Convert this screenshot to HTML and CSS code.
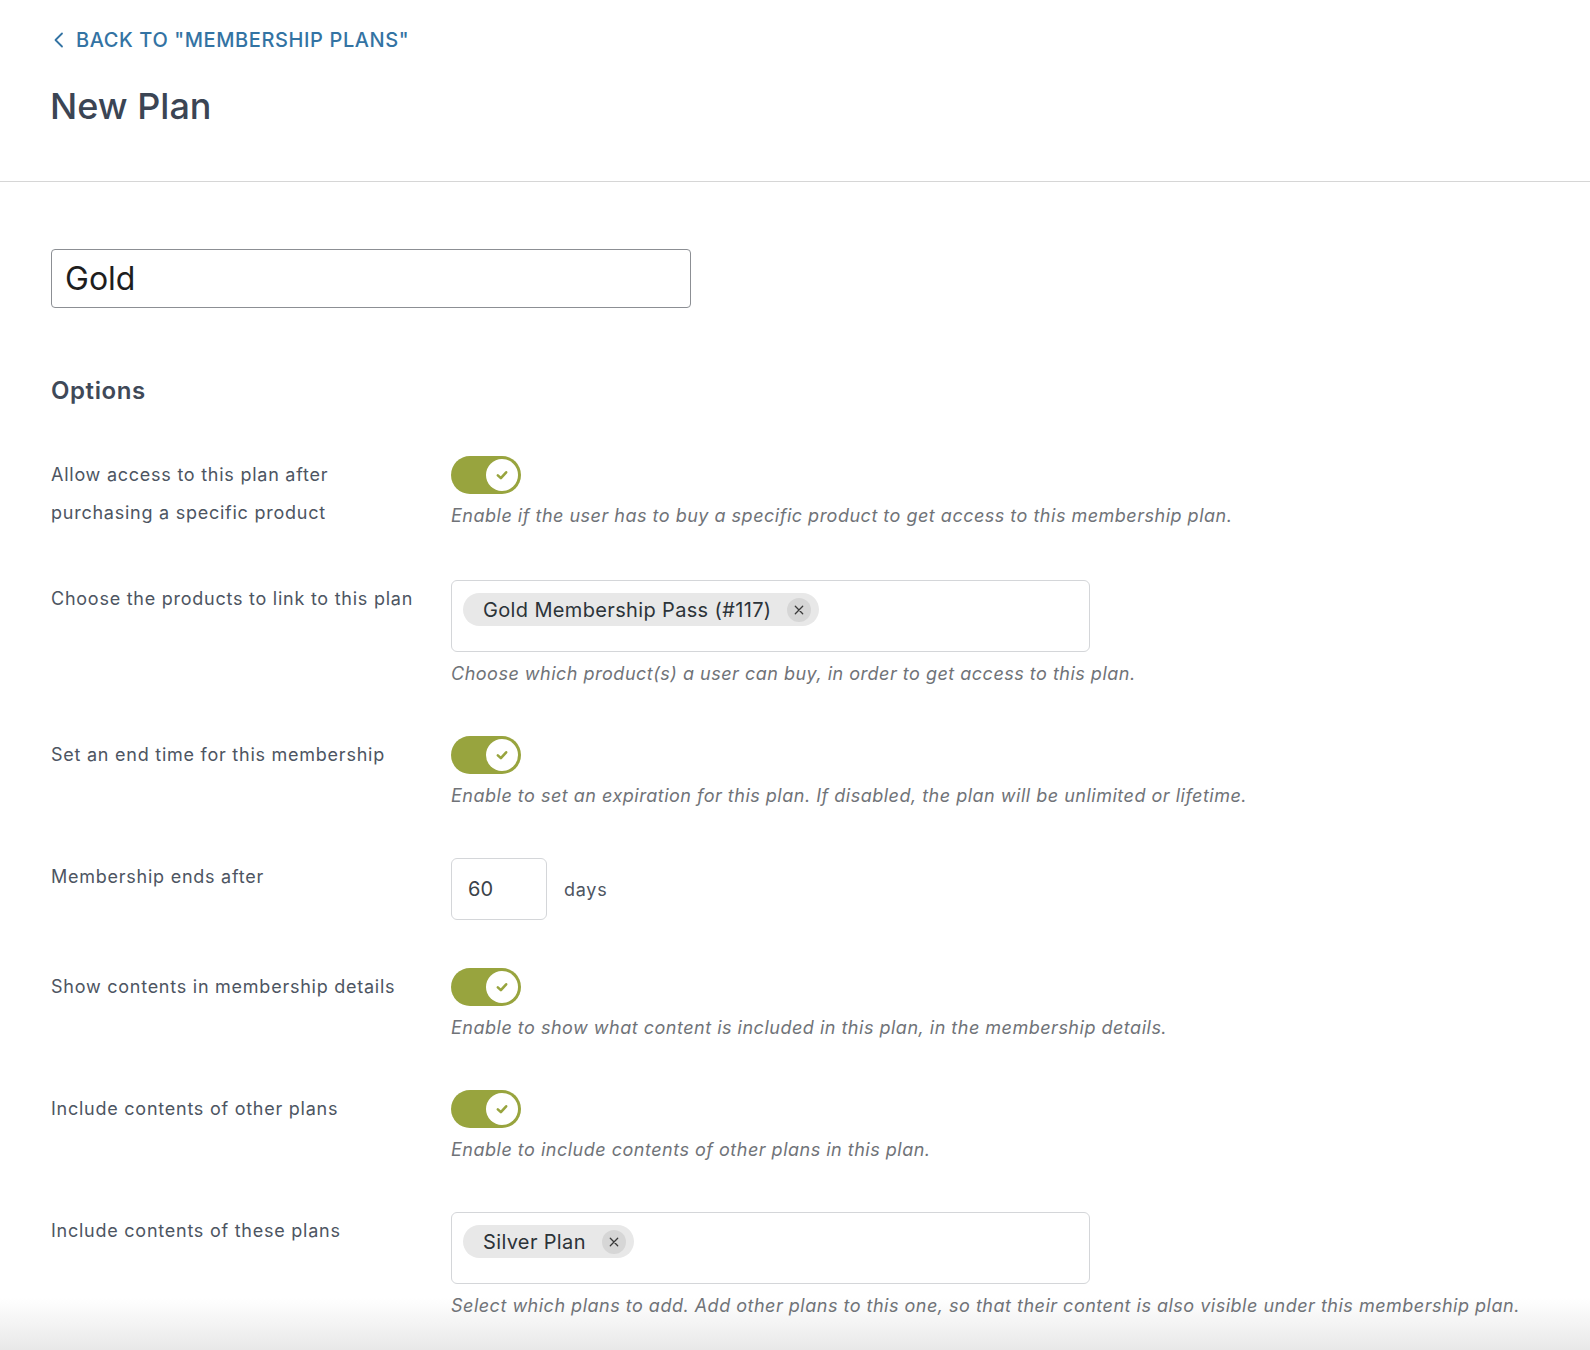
FILE: index.html
```html
<!DOCTYPE html>
<html lang="en">
<head>
<meta charset="utf-8">
<title>New Plan</title>
<link rel="stylesheet" href="styles.css">
</head>
<body>
<header class="page-header">
  <a class="back-link" href="#">
    <svg class="back-icon" width="12" height="16" viewBox="0 0 12 16"><path d="M9 1.5 L2.5 8 L9 14.5" fill="none" stroke="currentColor" stroke-width="1.8" stroke-linecap="round" stroke-linejoin="round"/></svg>
    <span>BACK TO "MEMBERSHIP PLANS"</span>
  </a>
  <h1 class="page-title">New Plan</h1>
</header>
<main class="content">
  <div class="title-input">Gold</div>
  <h2 class="section-title">Options</h2>
  <div class="options">
    <div class="row">
      <div class="label">Allow access to this plan after purchasing a specific product</div>
      <div class="control">
        <span class="toggle"><span class="knob"><svg width="18" height="18" viewBox="0 0 16 16"><path d="M4.3 8.3 L7 10.8 L11.7 5.6" fill="none" stroke="#98a43e" stroke-width="2.3" stroke-linecap="round" stroke-linejoin="round"/></svg></span></span>
        <p class="desc">Enable if the user has to buy a specific product to get access to this membership plan.</p>
      </div>
    </div>
    <div class="row">
      <div class="label">Choose the products to link to this plan</div>
      <div class="control">
        <div class="select-box">
          <span class="chip">Gold Membership Pass (#117)<span class="chip-x"><svg width="12" height="12" viewBox="0 0 12 12"><path d="M2.3 2.3 L9.7 9.7 M9.7 2.3 L2.3 9.7" stroke="#3a3a3a" stroke-width="1.3" stroke-linecap="round"/></svg></span></span>
        </div>
        <p class="desc">Choose which product(s) a user can buy, in order to get access to this plan.</p>
      </div>
    </div>
    <div class="row">
      <div class="label">Set an end time for this membership</div>
      <div class="control">
        <span class="toggle"><span class="knob"><svg width="18" height="18" viewBox="0 0 16 16"><path d="M4.3 8.3 L7 10.8 L11.7 5.6" fill="none" stroke="#98a43e" stroke-width="2.3" stroke-linecap="round" stroke-linejoin="round"/></svg></span></span>
        <p class="desc">Enable to set an expiration for this plan. If disabled, the plan will be unlimited or lifetime.</p>
      </div>
    </div>
    <div class="row">
      <div class="label">Membership ends after</div>
      <div class="control">
        <div class="duration">
          <div class="number-input">60</div>
          <span class="unit">days</span>
        </div>
      </div>
    </div>
    <div class="row">
      <div class="label">Show contents in membership details</div>
      <div class="control">
        <span class="toggle"><span class="knob"><svg width="18" height="18" viewBox="0 0 16 16"><path d="M4.3 8.3 L7 10.8 L11.7 5.6" fill="none" stroke="#98a43e" stroke-width="2.3" stroke-linecap="round" stroke-linejoin="round"/></svg></span></span>
        <p class="desc">Enable to show what content is included in this plan, in the membership details.</p>
      </div>
    </div>
    <div class="row">
      <div class="label">Include contents of other plans</div>
      <div class="control">
        <span class="toggle"><span class="knob"><svg width="18" height="18" viewBox="0 0 16 16"><path d="M4.3 8.3 L7 10.8 L11.7 5.6" fill="none" stroke="#98a43e" stroke-width="2.3" stroke-linecap="round" stroke-linejoin="round"/></svg></span></span>
        <p class="desc">Enable to include contents of other plans in this plan.</p>
      </div>
    </div>
    <div class="row">
      <div class="label">Include contents of these plans</div>
      <div class="control">
        <div class="select-box">
          <span class="chip">Silver Plan<span class="chip-x"><svg width="12" height="12" viewBox="0 0 12 12"><path d="M2.3 2.3 L9.7 9.7 M9.7 2.3 L2.3 9.7" stroke="#3a3a3a" stroke-width="1.3" stroke-linecap="round"/></svg></span></span>
        </div>
        <p class="desc">Select which plans to add. Add other plans to this one, so that their content is also visible under this membership plan.</p>
      </div>
    </div>
  </div>
</main>
</body>
</html>
```
FILE: styles.css
```css
* { box-sizing: border-box; }
html, body { margin: 0; padding: 0; }
body {
  font-family: Inter, "Noto Sans", "Liberation Sans", sans-serif;
  min-height: 1350px;
  background: linear-gradient(to bottom, #ffffff 0, #ffffff 1298px, #e8e8e8 1350px);
  color: #4d5562;
}
.page-header {
  padding: 28px 50px 53px;
  border-bottom: 1px solid #d6d6d6;
}
.back-link {
  display: flex;
  align-items: center;
  gap: 11px;
  height: 24px;
  color: #3373a3;
  text-decoration: none;
  font-size: 20px;
  font-weight: 500;
  letter-spacing: 0.6px;
  padding-left: 3px;
}
.back-icon { flex: none; }
.page-title {
  margin: 32px 0 0;
  font-size: 36px;
  line-height: 44px;
  font-weight: 500;
  color: #3b4554;
}
.content {
  padding: 67px 51px 0;
}
.title-input {
  width: 640px;
  height: 59px;
  border: 1px solid #8c8f94;
  border-radius: 4px;
  padding: 0 13px;
  font-size: 32px;
  line-height: 57px;
  color: #1e1e1e;
  background: #fff;
}
.section-title {
  margin: 68px 0 50px;
  font-size: 24px;
  line-height: 30px;
  font-weight: 600;
  letter-spacing: 0.6px;
  color: #3f4958;
}
.options {
  display: flex;
  flex-direction: column;
  gap: 48px;
}
.row {
  display: grid;
  grid-template-columns: 400px 1fr;
}
.label {
  font-size: 18px;
  line-height: 38px;
  letter-spacing: 0.75px;
  color: #4d5562;
  padding-right: 30px;
}
.control { display: flex; flex-direction: column; align-items: flex-start; }
.toggle {
  display: flex;
  align-items: center;
  justify-content: flex-end;
  width: 70px;
  height: 38px;
  border-radius: 19px;
  background: #98a43e;
  padding: 3px;
}
.knob {
  width: 32px;
  height: 32px;
  border-radius: 50%;
  background: #fff;
  display: flex;
  align-items: center;
  justify-content: center;
}
.desc {
  margin: 8px 0 0;
  font-size: 18px;
  line-height: 28px;
  font-style: italic;
  letter-spacing: 0.5px;
  color: #707378;
}
.select-box {
  width: 639px;
  min-height: 72px;
  border: 1px solid #d4d6d9;
  border-radius: 6px;
  padding: 12px 11px;
  background: #fff;
}
.chip {
  display: inline-flex;
  align-items: center;
  height: 33px;
  border-radius: 17px;
  background: #e8e8e8;
  padding: 0 8px 0 20px;
  font-size: 20px;
  letter-spacing: 0.35px;
  color: #2c3338;
  gap: 16px;
}
.chip-x {
  width: 24px;
  height: 24px;
  border-radius: 50%;
  background: #d6d6d6;
  display: flex;
  align-items: center;
  justify-content: center;
}
.duration {
  display: flex;
  align-items: center;
  gap: 17px;
}
.number-input {
  width: 96px;
  height: 62px;
  border: 1px solid #d4d6d9;
  border-radius: 6px;
  padding: 0 16px;
  font-size: 20px;
  line-height: 60px;
  color: #3c434a;
  background: #fff;
}
.unit {
  font-size: 18px;
  color: #4d5562;
  letter-spacing: 0.75px;
}
```
